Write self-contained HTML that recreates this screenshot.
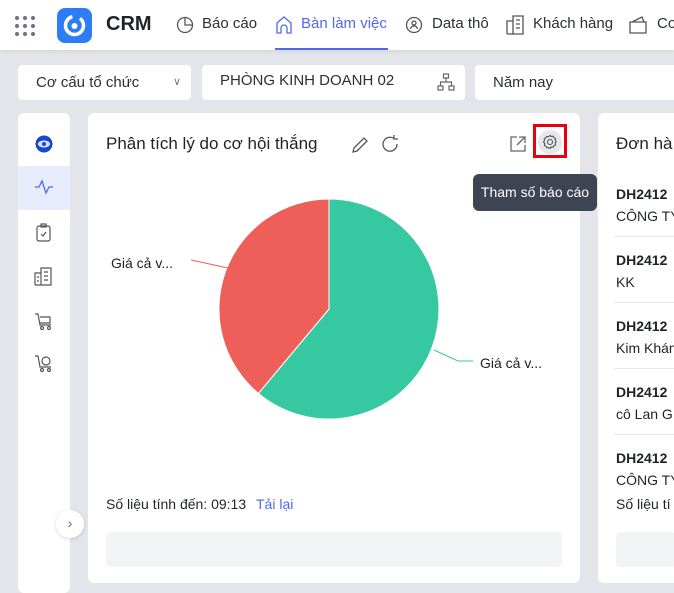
<!DOCTYPE html>
<html><head><meta charset="utf-8"><style>
*{box-sizing:border-box;margin:0;padding:0}
body{width:674px;height:585px;overflow:hidden;background:#e4e5ea;font-family:"Liberation Sans",sans-serif;position:relative;color:#1f2329}
.abs{position:absolute}
.top{left:0;top:0;width:674px;height:50px;background:#fff;box-shadow:0 2px 4px rgba(0,0,0,.06)}
.nav{top:15px;font-size:15px;color:#2b2f36}
.filter{top:65px;height:35px;background:#fff;border-radius:4px;font-size:15px;padding:0 18px;line-height:35px;color:#2b2f36}
.card{background:#fff;border-radius:6px}
.it{white-space:nowrap;width:58px;overflow:hidden}
.it b{font-size:14px;display:block}
.it span{font-size:14px;display:block;margin-top:6px}
</style></head><body>
<div class="abs top"></div>
<svg class="abs" style="left:14px;top:15px" width="22" height="22"><g fill="#6b7280"><circle cx="3" cy="3" r="2"/><circle cx="11" cy="3" r="2"/><circle cx="19" cy="3" r="2"/><circle cx="3" cy="11" r="2"/><circle cx="11" cy="11" r="2"/><circle cx="19" cy="11" r="2"/><circle cx="3" cy="19" r="2"/><circle cx="11" cy="19" r="2"/><circle cx="19" cy="19" r="2"/></g></svg>
<div class="abs" style="left:57px;top:8px;width:35px;height:35px;border-radius:8px;background:#2f7df6"></div>
<svg class="abs" style="left:57px;top:8px" width="35" height="35"><circle cx="17.5" cy="17.5" r="9" fill="none" stroke="#fff" stroke-width="3.5" stroke-dasharray="40 8"/><circle cx="17.5" cy="18" r="3" fill="#fff"/></svg>
<div class="abs" style="left:106px;top:13px;font-size:20px;font-weight:bold">CRM</div>
<svg class="abs" style="left:176px;top:16px" width="18" height="18" fill="none" stroke="#555" stroke-width="1.3"><circle cx="9" cy="9" r="7.5"/><path d="M9 1.5V9H16.5"/></svg>
<div class="abs nav" style="left:202px">Báo cáo</div>
<svg class="abs" style="left:275px;top:15px" width="18" height="20" fill="none" stroke="#4f6af0" stroke-width="1.3"><path d="M2 8L9 2L16 8V18H12V13a3 3 0 0 0-6 0V18H2Z"/></svg>
<div class="abs nav" style="left:301px;color:#4f6af0">Bàn làm việc</div>
<div class="abs" style="left:275px;top:48px;width:113px;height:2px;background:#4f6af0"></div>
<svg class="abs" style="left:405px;top:16px" width="18" height="18" fill="none" stroke="#555" stroke-width="1.3"><circle cx="9" cy="9" r="7.5"/><circle cx="9" cy="7" r="2"/><path d="M5.5 13a3.5 3 0 0 1 7 0"/></svg>
<div class="abs nav" style="left:432px">Data thô</div>
<svg class="abs" style="left:506px;top:15px" width="18" height="20" fill="none" stroke="#555" stroke-width="1.3"><path d="M1 19V6H7V19M7 19V1H17V19H1M10 5h4M10 9h4M10 13h4"/></svg>
<div class="abs nav" style="left:533px">Khách hàng</div>
<svg class="abs" style="left:628px;top:15px" width="20" height="20" fill="none" stroke="#555" stroke-width="1.3"><path d="M2 7H18V18H2ZM4 7L14 2L16 7"/></svg>
<div class="abs nav" style="left:657px">Cơ</div>

<div class="abs filter" style="left:18px;width:173px">Cơ cấu tổ chức<span style="position:absolute;right:10px;top:0;color:#777;font-size:11px">&#x2228;</span></div>
<div class="abs filter" style="left:202px;width:263px;line-height:31px">PHÒNG KINH DOANH 02
<svg style="position:absolute;right:10px;top:8px" width="18" height="18" fill="none" stroke="#666" stroke-width="1.2"><rect x="6.5" y="1" width="5" height="4"/><rect x="1" y="13" width="5" height="4"/><rect x="12" y="13" width="5" height="4"/><path d="M9 5V9M3.5 13V9H14.5V13"/></svg></div>
<div class="abs filter" style="left:475px;width:210px">Năm nay</div>

<div class="abs card" style="left:18px;top:113px;width:52px;height:480px"></div>
<div class="abs" style="left:18px;top:166px;width:52px;height:44px;background:#e8ebfb"></div>
<svg class="abs" style="left:35px;top:135px" width="18" height="18"><circle cx="9" cy="9" r="8.5" fill="#1747d0"/><ellipse cx="9" cy="9" rx="6" ry="3.5" fill="#d9e2ff"/><circle cx="9" cy="9" r="2" fill="#1747d0"/></svg>
<svg class="abs" style="left:34px;top:178px" width="20" height="18" fill="none" stroke="#4f6af0" stroke-width="1.3"><path d="M1 9H5L8 3L12 15L15 9H19"/></svg>
<svg class="abs" style="left:36px;top:223px" width="16" height="20" fill="none" stroke="#555" stroke-width="1.2"><rect x="1" y="3" width="13" height="15" rx="2"/><rect x="5" y="1" width="5" height="3"/><path d="M5 11L7 13L10 9"/></svg>
<svg class="abs" style="left:34px;top:266px" width="20" height="20" fill="none" stroke="#555" stroke-width="1.2"><path d="M1 19V7H7V19M7 19V2H17V19H1M10 6h4M10 10h4M10 14h4M3 11h2M3 15h2"/></svg>
<svg class="abs" style="left:34px;top:312px" width="20" height="20" fill="none" stroke="#555" stroke-width="1.2"><path d="M1 2H4L6 13H17M6 5H16V11H6"/><circle cx="8" cy="16" r="1.5"/><circle cx="15" cy="16" r="1.5"/></svg>
<svg class="abs" style="left:34px;top:354px" width="20" height="20" fill="none" stroke="#555" stroke-width="1.2"><path d="M1 2H4L6 13H17"/><circle cx="12" cy="7" r="4"/><circle cx="8" cy="16" r="1.5"/><circle cx="15" cy="16" r="1.5"/></svg>
<div class="abs" style="left:56px;top:510px;width:28px;height:28px;border-radius:50%;background:#fff;box-shadow:0 1px 4px rgba(0,0,0,.15);text-align:center;line-height:27px;color:#666;font-size:14px">›</div>

<div class="abs card" style="left:88px;top:113px;width:492px;height:470px"></div>
<div class="abs" style="left:106px;top:134px;font-size:17px">Phân tích lý do cơ hội thắng</div>
<svg class="abs" style="left:350px;top:135px" width="20" height="20" fill="none" stroke="#555" stroke-width="1.3"><path d="M3 17L4 13L14 3L17 6L7 16Z"/></svg>
<svg class="abs" style="left:380px;top:134px" width="21" height="21" fill="none" stroke="#555" stroke-width="1.3"><path d="M17 10A7 7 0 1 1 14 4.5M14 1V5H18"/></svg>
<svg class="abs" style="left:509px;top:135px" width="18" height="18" fill="none" stroke="#666" stroke-width="1.3"><path d="M8 2H2V16H16V10M10 2H16V8M16 2L8 10"/></svg>
<div class="abs" style="left:533px;top:124px;width:34px;height:34px;border:3px solid #e8000b"></div>
<div class="abs" style="left:538px;top:130px;width:24px;height:24px;border-radius:50%;background:#e6e7eb"></div>
<svg class="abs" style="left:538px;top:130px" width="24" height="24" fill="none" stroke="#555" stroke-width="1.1"><circle cx="12" cy="12" r="2.5"/><path d="M12 5.5l1.4 1 1.8-.3.8 1.5 1.5.8-.3 1.8 1 1.4-1 1.4.3 1.8-1.5.8-.8 1.5-1.8-.3L12 18.5l-1.4-1-1.8.3-.8-1.5-1.5-.8.3-1.8L5.5 12l1-1.4-.3-1.8 1.5-.8.8-1.5 1.8.3Z"/></svg>
<div class="abs" style="left:473px;top:174px;width:124px;height:37px;border-radius:6px;background:#3f4452;color:#fff;font-size:14px;line-height:37px;text-align:center">Tham số báo cáo</div>

<svg class="abs" style="left:88px;top:180px" width="492" height="260">
<path d="M241 129L241 19A110 110 0 1 1 170.4 213.4Z" fill="#36c8a0" stroke="#fff" stroke-width="1"/>
<path d="M241 129L170.4 213.4A110 110 0 0 1 241 19Z" fill="#ef5f5a" stroke="#fff" stroke-width="1"/>
<path d="M103 80L140 88" fill="none" stroke="#ef5f5a"/>
<path d="M346 170L370 181L385 181" fill="none" stroke="#36c8a0"/>
<text x="23" y="88" font-size="14" fill="#222" font-family="Liberation Sans">Giá cả v...</text>
<text x="392" y="188" font-size="14" fill="#222" font-family="Liberation Sans">Giá cả v...</text>
</svg>
<div class="abs" style="left:106px;top:496px;font-size:14px">Số liệu tính đến: 09:13 <span style="color:#4f6af0;margin-left:6px">Tải lại</span></div>
<div class="abs" style="left:106px;top:532px;width:456px;height:35px;border-radius:5px;background:#f2f3f5"></div>

<div class="abs card" style="left:598px;top:113px;width:90px;height:470px"></div>
<div class="abs" style="left:616px;top:134px;font-size:17px;white-space:nowrap">Đơn hà</div>
<div class="abs it" style="left:616px;top:186px"><b>DH2412</b><span>CÔNG TY</span></div>
<div class="abs it" style="left:616px;top:252px"><b>DH2412</b><span>KK</span></div>
<div class="abs it" style="left:616px;top:318px"><b>DH2412</b><span>Kim Khán</span></div>
<div class="abs it" style="left:616px;top:384px"><b>DH2412</b><span>cô Lan G</span></div>
<div class="abs it" style="left:616px;top:450px"><b>DH2412</b><span>CÔNG TY</span></div>
<div class="abs" style="left:614px;top:236px;width:60px;height:1px;background:#e5e6eb"></div>
<div class="abs" style="left:614px;top:302px;width:60px;height:1px;background:#e5e6eb"></div>
<div class="abs" style="left:614px;top:368px;width:60px;height:1px;background:#e5e6eb"></div>
<div class="abs" style="left:614px;top:434px;width:60px;height:1px;background:#e5e6eb"></div>
<div class="abs" style="left:616px;top:496px;font-size:14px;white-space:nowrap">Số liệu tí</div>
<div class="abs" style="left:616px;top:532px;width:60px;height:35px;border-radius:5px;background:#f2f3f5"></div>
</body></html>
